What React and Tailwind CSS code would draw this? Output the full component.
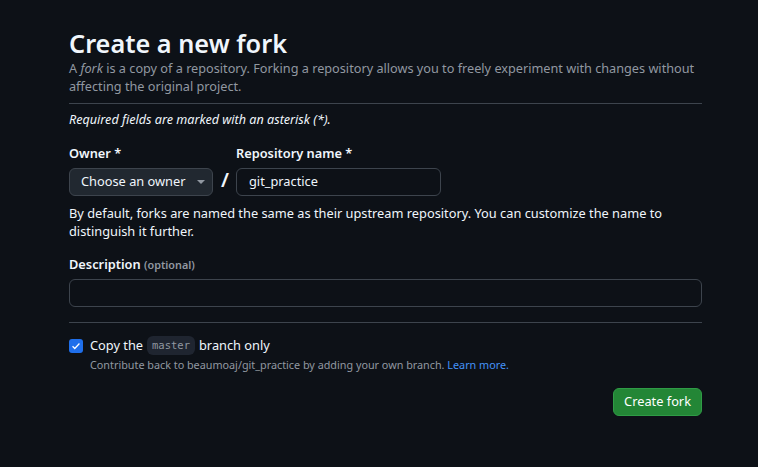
import React from "react";

export default function App() {
  return (
    <div
      className="min-h-[467px] w-full bg-[#0d1117] text-[#f0f6fc]"
      style={{ fontFamily: '"Noto Sans", sans-serif' }}
    >
      <div className="ml-[69px] w-[633px] pt-[27px]">
        <h1 className="text-[25.3px] font-semibold leading-[32px] text-[#f0f6fc]">
          Create a new fork
        </h1>
        <p className="text-[12.7px] leading-[18px] text-[#9198a1]">
          A <em>fork</em> is a copy of a repository. Forking a repository allows you to freely experiment with changes without affecting the original project.
        </p>
        <div className="mt-[8px] h-px bg-[#3d444d]" />
        <p className="mt-[7px] text-[12.6px] italic leading-[18px] text-[#f0f6fc]">
          Required fields are marked with an asterisk (*).
        </p>

        <div className="mt-[15px] flex items-end">
          <div className="flex flex-col">
            <label className="text-[12.8px] font-semibold leading-[18px]">Owner *</label>
            <button className="mt-[6px] flex h-[28px] w-[144px] items-center whitespace-nowrap rounded-[6px] border border-[#3d444d] bg-[#212830] pl-[11px] text-[12.8px] text-[#f0f6fc]">
              Choose an owner
              <svg className="ml-[11px]" width="8" height="4" viewBox="0 0 8 4">
                <path d="M0 0h8L4 4z" fill="#9198a1" />
              </svg>
            </button>
          </div>
          <span className="ml-[8px] mr-[7px] mb-[4px] text-[20px] font-semibold leading-[24px]">/</span>
          <div className="flex flex-col">
            <label className="text-[12.8px] font-semibold leading-[18px]">Repository name *</label>
            <div className="mt-[6px] flex h-[28px] w-[205px] items-center rounded-[6px] border border-[#3d444d] bg-[#0d1117] pl-[12px] text-[12.8px]">
              git_practice
            </div>
          </div>
        </div>
        <p className="mt-[8px] text-[12.8px] leading-[18px] text-[#f0f6fc]">
          By default, forks are named the same as their upstream repository. You can customize the name to distinguish it further.
        </p>

        <div className="mt-[14px] leading-[18px]">
          <label className="text-[12.8px] font-semibold leading-[18px]">
            Description <span className="text-[10.8px] font-semibold text-[#9198a1]">(optional)</span>
          </label>
          <div className="mt-[5px] h-[28px] rounded-[6px] border border-[#3d444d] bg-[#0d1117]" />
        </div>
        <div className="mt-[15px] h-px bg-[#3d444d]" />

        <div className="mt-[13px] flex items-start gap-[7px]">
          <div className="mt-[3px] flex h-[14px] w-[14px] items-center justify-center rounded-[3px] bg-[#1f6feb]">
            <svg width="10" height="10" viewBox="0 0 16 16">
              <path d="M2.5 8.5l3.5 3.5 7.5-8" fill="none" stroke="#ffffff" strokeWidth="2" />
            </svg>
          </div>
          <div className="flex flex-col">
            <div className="flex h-[18px] items-center text-[12.8px] leading-[18px]">
              Copy the
              <code
                className="mx-[4px] rounded-[6px] bg-[#1f2530] px-[5px] py-[1px] text-[10.5px] leading-[17px] text-[#9198a1]"
                style={{ fontFamily: '"DejaVu Sans Mono", monospace' }}
              >
                master
              </code>
              branch only
            </div>
            <p className="mt-[3px] text-[10.8px] leading-[16px] text-[#9198a1]">
              Contribute back to beaumoaj/git_practice by adding your own branch.{" "}
              <span className="text-[#4493f8]">Learn more.</span>
            </p>
          </div>
        </div>

        <div className="mt-[15px] flex justify-end">
          <button className="h-[28px] rounded-[6px] border border-[#2f9c46] bg-[#238636] px-[10px] text-[12.8px] text-white">
            Create fork
          </button>
        </div>
      </div>
    </div>
  );
}
